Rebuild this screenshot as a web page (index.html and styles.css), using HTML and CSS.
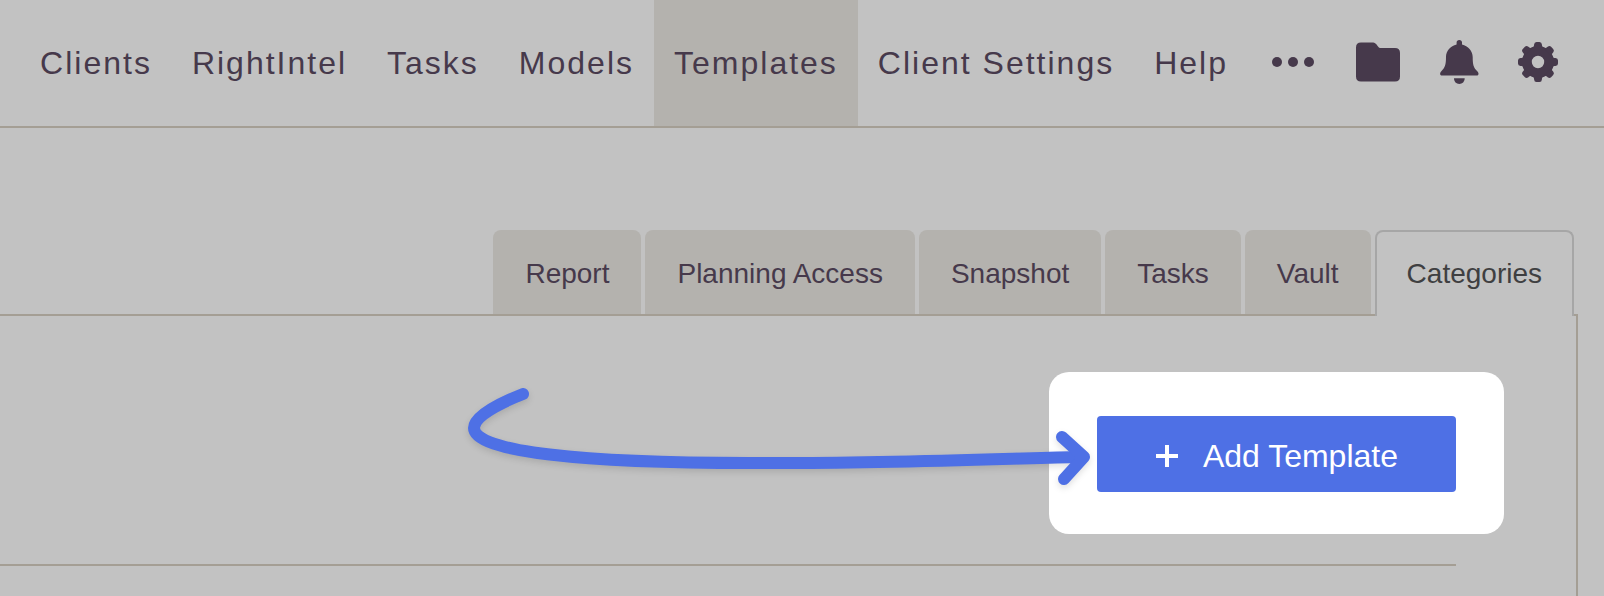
FILE: index.html
```html
<!DOCTYPE html>
<html lang="en">
<head>
  <meta charset="UTF-8">
  <meta name="viewport" content="width=device-width, initial-scale=1.0">
  <title>Templates - Categories</title>
  <link rel="stylesheet" href="styles.css">
</head>
<body>

  <header class="topbar">
    <nav class="main-nav">
      <a href="#">Clients</a>
      <a href="#">RightIntel</a>
      <a href="#">Tasks</a>
      <a href="#">Models</a>
      <a href="#" class="active">Templates</a>
      <a href="#">Client Settings</a>
      <a href="#">Help</a>
    </nav>
    <div class="actions">
      <button type="button" aria-label="More">
        <svg width="48" height="44" viewBox="0 0 48 44"><circle cx="5" cy="22" r="5"/><circle cx="21" cy="22" r="5"/><circle cx="37" cy="22" r="5"/></svg>
      </button>
      <button type="button" aria-label="Files">
        <svg width="44" height="44" viewBox="0 0 44 44"><path d="M5 2.500H16C19.500 2.500 20.500 4.500 22 6.500Q23 8 24.500 8H39Q44 8 44 13V36.500Q44 41.500 39 41.500H5Q0 41.500 0 36.500V7.500Q0 2.500 5 2.500Z"/></svg>
      </button>
      <button type="button" aria-label="Notifications">
        <svg width="44" height="44" viewBox="0 0 44 44"><path d="M23.300 0C25 0 26 1.200 26 2.500V4.500C32 6 36.700 11 36.700 17C36.700 25 37.500 27.500 41.500 31.500C43.200 33.500 42.700 35.600 40.700 35.600H6C4 35.600 3.400 33.500 5.100 31.500C9 27.500 10 25 10 17C10 11 14.500 6 20.600 4.500V2.500C20.600 1.200 21.600 0 23.300 0Z"/><path d="M18 38.300H28.700C28.700 41.800 26.300 44 23.300 44S18 41.800 18 38.300Z"/></svg>
      </button>
      <button type="button" aria-label="Settings">
        <svg width="44" height="44" viewBox="0 0 44 44">
          <path fill-rule="evenodd" d="M22 6A16 16 0 1 0 22 38A16 16 0 1 0 22 6ZM22 15.800A6.200 6.200 0 1 1 22 28.200A6.200 6.200 0 1 1 22 15.800Z"/>
          <path id="tooth" d="M16.500 8C17.800 7.200 18 6 18.100 4.500Q18.300 2 20.500 2H23.500Q25.700 2 25.900 4.500C26 6 26.200 7.200 27.500 8Z"/>
          <use href="#tooth" transform="rotate(45 22 22)"/>
          <use href="#tooth" transform="rotate(90 22 22)"/>
          <use href="#tooth" transform="rotate(135 22 22)"/>
          <use href="#tooth" transform="rotate(180 22 22)"/>
          <use href="#tooth" transform="rotate(225 22 22)"/>
          <use href="#tooth" transform="rotate(270 22 22)"/>
          <use href="#tooth" transform="rotate(315 22 22)"/>
        </svg>
      </button>
    </div>
  </header>

  <main>
    <div class="tabs">
      <a href="#">Report</a>
      <a href="#">Planning Access</a>
      <a href="#">Snapshot</a>
      <a href="#">Tasks</a>
      <a href="#">Vault</a>
      <a href="#" class="current">Categories</a>
    </div>

    <section class="panel">
      <div class="toolbar">
        <div class="spotlight">
          <button type="button" class="add-button">
            <svg width="24" height="24" viewBox="0 0 24 24"><path d="M12 1V23M1 12H23"/></svg>
            Add Template
          </button>
          <svg class="arrow" width="632" height="120" viewBox="0 0 632 120">
            <path d="M63 14C40 23 14 36 14 48C14 72 124 83 290 83C400 84 504 80 616 77"/>
            <path d="M602 57L624 77L604 99"/>
          </svg>
        </div>
      </div>
      <hr>
    </section>
  </main>

</body>
</html>
```
FILE: styles.css
```css
* {
  box-sizing: border-box;
}
body {
  margin: 0;
  background-color: #c2c2c2;
  color: #46394b;
  font-family: "Liberation Sans", Arial, sans-serif;
  overflow-x: hidden;
}
a {
  color: inherit;
  text-decoration: none;
}
button {
  border: none;
  background: none;
  padding: 0;
  color: inherit;
  font-family: inherit;
  cursor: pointer;
}
svg {
  display: block;
}

/* top navigation */
.topbar {
  display: flex;
  justify-content: flex-end;
  border-bottom: 2px solid #a49e94;
  padding-right: 44px;
}
.main-nav {
  display: flex;
}
.main-nav a {
  padding: 0 20px;
  font-size: 32px;
  line-height: 126px;
  letter-spacing: 2px;
  white-space: nowrap;
}
.main-nav .active {
  background-color: #b4b2ae;
}
.actions {
  display: flex;
  align-items: center;
  gap: 36px;
  padding: 0 0 2px 24px;
}
.actions svg {
  fill: #46394b;
}

/* template type tabs */
.tabs {
  display: flex;
  justify-content: flex-end;
  gap: 4px;
  padding: 102px 30px 0 0;
}
.tabs a {
  height: 84px;
  padding: 0 32px;
  border-radius: 8px 8px 0 0;
  background-color: #b4b2ae;
  font-size: 28px;
  line-height: 88px;
  white-space: nowrap;
}
.tabs .current {
  position: relative;
  height: 86px;
  margin-bottom: -2px;
  padding: 0 30px;
  border: 2px solid #a6a6a6;
  border-bottom: none;
  background-color: #c2c2c2;
  color: #3f3f41;
  line-height: 84px;
}

.panel {
  min-height: 282px;
  margin-right: 26px;
  padding: 56px 120px 0 0;
  border-top: 2px solid #a49e94;
  border-right: 2px solid #a49e94;
}
.toolbar {
  display: flex;
  justify-content: flex-end;
}
.spotlight {
  position: relative;
  margin-right: -48px;
  padding: 44px 48px 42px;
  border-radius: 20px;
  background-color: #fff;
}
.add-button {
  display: flex;
  align-items: center;
  gap: 24px;
  height: 76px;
  padding: 4px 58px 0;
  border-radius: 4px;
  background-color: #4e70e5;
  color: #fff;
  font-size: 32px;
  white-space: nowrap;
}
.add-button svg {
  fill: none;
  stroke: #fff;
  stroke-width: 4;
}
.arrow {
  position: absolute;
  top: 8px;
  right: 412px;
  fill: none;
  stroke: #4e70e5;
  stroke-width: 12;
  stroke-linecap: round;
  stroke-linejoin: round;
  filter: drop-shadow(0 3px 3px rgba(0, 0, 0, 0.12));
  pointer-events: none;
}
hr {
  margin: 30px 0 0;
  border: none;
  border-top: 2px solid #a49e94;
}
```
